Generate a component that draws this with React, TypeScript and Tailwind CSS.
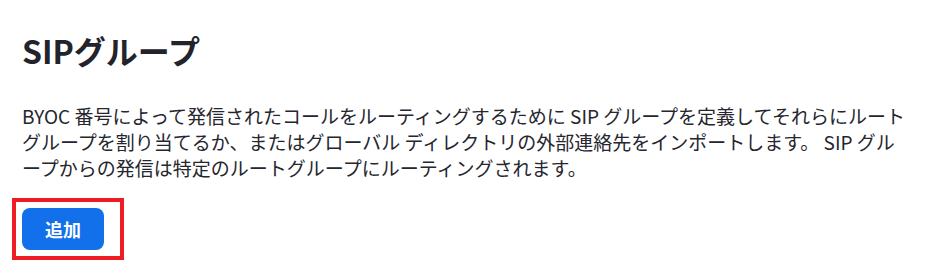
export default function App() {
  return (
    <div
      className="min-h-screen w-full bg-white text-[#22232b]"
      style={{ fontFamily: '"Noto Sans CJK JP", "Noto Sans", sans-serif' }}
    >
      <div className="pl-[22px] pr-[19px] pt-[27px]">
        <h1 className="text-[32px] font-bold leading-[46px]">SIPグループ</h1>

        <p className="mt-[30px] text-[19px] leading-[26px] text-[#25262e]">
          BYOC 番号によって発信されたコールをルーティングするために SIP グループを定義してそれらにルートグループを割り当てるか、またはグローバル ディレクトリの外部連絡先をインポートします。 SIP グループからの発信は特定のルートグループにルーティングされます。
        </p>

        <div className="-ml-[10px] mt-[17px] inline-flex border-4 border-[#ee1c24] py-[6px] pl-[6px] pr-[16px]">
          <button className="h-[42px] w-[82px] rounded-lg bg-[#1170ea] text-[18px] font-bold text-white">
            追加
          </button>
        </div>
      </div>
    </div>
  );
}
